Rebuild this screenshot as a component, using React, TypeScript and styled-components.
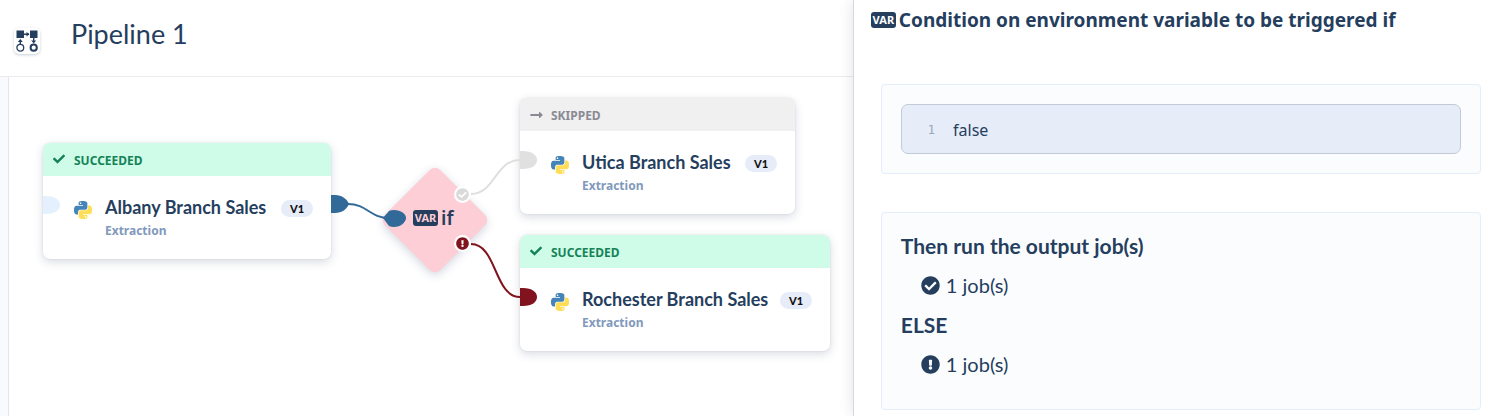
import React from 'react';
import styled, { createGlobalStyle } from 'styled-components';
import { FaCheck, FaCheckCircle, FaExclamationCircle, FaLongArrowAltRight } from 'react-icons/fa';

const navy = '#253e5e';

const GlobalStyle = createGlobalStyle`
  * { box-sizing: border-box; }
  body {
    margin: 0;
    background: #fff;
    color: ${navy};
    font-family: Lato, "Liberation Sans", sans-serif;
  }
  h1, h2, h3, p { margin: 0; }
`;

const Page = styled.div`
  display: grid;
  grid-template-columns: 57.2% minmax(0, 1fr);
  min-height: 100vh;
`;

const Main = styled.main`
  display: flex;
  flex-direction: column;
  min-width: 0;
`;

const Header = styled.header`
  display: flex;
  align-items: flex-start;
  gap: 31px;
  height: 77px;
  padding: 14px 14px 0;
  border-bottom: 1px solid #ebebed;
`;

const LogoTile = styled.div`
  display: flex;
  align-items: center;
  justify-content: center;
  width: 26px;
  height: 26px;
  margin-top: 14px;
  border-radius: 5px;
  background: #fff;
  box-shadow: 0 1px 3px rgba(37, 62, 94, 0.25);
`;

const Title = styled.h1`
  font-size: 27px;
  font-weight: 400;
  line-height: 40px;
`;

const Workspace = styled.div`
  display: flex;
  flex: 1;
  padding-left: 8px;
  background: #f8fafd;
`;

const Canvas = styled.div`
  position: relative;
  flex: 1;
  overflow: hidden;
  border-left: 1px solid #e3e6ea;
  background: #fff;
`;

const Node = styled.article<{ $x: number; $y: number; $width: number }>`
  position: absolute;
  left: ${p => p.$x}px;
  top: ${p => p.$y}px;
  width: ${p => p.$width}px;
  overflow: hidden;
  border-radius: 7px;
  background: #fff;
  box-shadow: 0 3px 10px rgba(37, 55, 94, 0.18), 0 0 2px rgba(37, 55, 94, 0.12);
`;

const Status = styled.div<{ $skipped: boolean }>`
  display: flex;
  align-items: center;
  gap: 8px;
  height: 33px;
  padding: 2px 10px 0;
  background: ${p => (p.$skipped ? '#f0f0f0' : '#cffce8')};
  color: ${p => (p.$skipped ? '#8a8a94' : '#158358')};
  font: 700 12px/16px "Noto Sans", sans-serif;
`;

const StatusIcon = styled.span`
  display: flex;
  width: 13px;
  height: 15px;
`;

const NodeBody = styled.div`
  display: grid;
  grid-template-columns: 18px minmax(0, 1fr) auto;
  column-gap: 13px;
  height: 83px;
  padding: 19px 18px 0 31px;
`;

const NodeIcon = styled.div`
  height: 18px;
  margin-top: 6px;
`;

const JobName = styled.h2`
  font-size: 18px;
  font-weight: 700;
  line-height: 24px;
  white-space: nowrap;
`;

const JobType = styled.p`
  color: #8199bc;
  font: 700 12px/24px "Noto Sans", sans-serif;
`;

const Version = styled.span`
  width: 32px;
  height: 17px;
  margin-top: 5px;
  border-radius: 9px;
  background: #e6edf9;
  color: #111;
  font-size: 11px;
  font-weight: 900;
  line-height: 17px;
  text-align: center;
`;

const Diamond = styled.div`
  position: absolute;
  left: 387px;
  top: 104px;
  width: 78px;
  height: 78px;
  border-radius: 7px;
  background: #fdced5;
  box-shadow: 2px 2px 10px rgba(37, 55, 94, 0.2);
  transform: rotate(45deg);
`;

const DiamondLabel = styled.div`
  position: absolute;
  left: 404px;
  top: 128px;
  display: flex;
  align-items: center;
  gap: 3px;
  font: 600 19px/26px "Noto Sans", sans-serif;
`;

const VarBadge = styled.span<{ $ink: string }>`
  flex: none;
  width: 25px;
  height: 16px;
  border-radius: 3px;
  background: ${navy};
  color: ${p => p.$ink};
  font: 700 11px/16px "Noto Sans", sans-serif;
  text-align: center;
`;

const Wires = styled.svg`
  position: absolute;
  left: 0;
  top: 0;
  width: 100%;
  height: 100%;
`;

const Outcome = styled.span<{ $y: number; $color: string }>`
  position: absolute;
  left: 445px;
  top: ${p => p.$y}px;
  width: 17px;
  height: 17px;
  padding: 2px;
  border-radius: 50%;
  background: #fff;
  color: ${p => p.$color};
  svg { display: block; width: 13px; height: 13px; }
`;

const Drawer = styled.aside`
  position: relative;
  min-width: 0;
  padding: 6px 10px 4px 17px;
  border-left: 1px solid #d4d8e2;
  background: #fff;
  box-shadow: 0 0 14px rgba(0, 0, 0, 0.12);
`;

const DrawerTitle = styled.h2`
  display: flex;
  align-items: center;
  gap: 3px;
  margin-bottom: 50px;
  font: 700 19px/28px "Noto Sans", sans-serif;
`;

const Panel = styled.section`
  margin: 0 0 38px 10px;
  padding: 19px;
  border: 1px solid #e4eefa;
  border-radius: 4px;
  background: #fbfcfe;
  &:last-child { margin-bottom: 0; }
`;

const Code = styled.div`
  display: flex;
  align-items: center;
  gap: 18px;
  height: 50px;
  padding: 2px 0 0 26px;
  border: 1px solid #c2cad7;
  border-radius: 7px;
  background: #e6ecf8;
  font: 400 16px/24px "Noto Sans", sans-serif;
`;

const LineNumber = styled.span`
  color: #98a6ba;
  font: 400 12px/24px "DejaVu Sans Mono", monospace;
`;

const Branch = styled.h3`
  font-size: 21px;
  font-weight: 700;
  line-height: 28px;
`;

const BranchJobs = styled.p`
  display: flex;
  align-items: center;
  gap: 6px;
  margin: 11px 0;
  padding-left: 20px;
  font-size: 20px;
  line-height: 29px;
  svg { width: 19px; height: 19px; }
`;

const PipelineIcon = () => (
  <svg width="22" height="22" viewBox="0 0 22 22" fill="none" stroke={navy}>
    <path d="M.5.5h7.5v7.5H.5zM14 .5h7.5v7.5H14z" fill={navy} stroke="none" />
    <path d="M8 4.3h5M4.3 14v-3M17.7 8v3" strokeWidth="1.4" />
    <path d="M10.5 2l3 2.3-3 2.3zM1.8 12L4.3 9l2.5 3zM15.2 10.5h5l-2.5 3z" fill={navy} stroke="none" />
    <circle cx="4.3" cy="17.7" r="3.4" strokeWidth="1.3" />
    <circle cx="17.7" cy="17.7" r="3.1" strokeWidth="2" />
  </svg>
);

const PythonIcon = () => (
  <svg width="18" height="18" viewBox="0 0 24 24">
    <path fill="#4584b6" d="M14.25.18l.9.2.73.26.59.3.45.32.34.34.25.34.16.33.1.3.04.26.02.2-.01.13V8.5l-.05.63-.13.55-.21.46-.26.38-.3.31-.33.25-.35.19-.35.14-.33.1-.3.07-.26.04-.21.02H8.77l-.69.05-.59.14-.5.22-.41.27-.33.32-.27.35-.2.36-.15.37-.1.35-.07.32-.04.27-.02.21v3.06H3.17l-.21-.03-.28-.07-.32-.12-.35-.18-.36-.26-.36-.36-.35-.46-.32-.59-.28-.73-.21-.88-.14-1.05-.05-1.23.06-1.22.16-1.04.24-.87.32-.71.36-.57.4-.44.42-.33.42-.24.4-.16.36-.1.32-.05.24-.01h.16l.06.01h8.16v-.83H6.18l-.01-2.75-.02-.37.05-.34.11-.31.17-.28.25-.26.31-.23.38-.2.44-.18.51-.15.58-.12.64-.1.71-.06.77-.04.84-.02 1.27.05zm-6.3 1.98l-.23.33-.08.41.08.41.23.34.33.22.41.09.41-.09.33-.22.23-.34.08-.41-.08-.41-.23-.33-.33-.22-.41-.09-.41.09z" />
    <path fill="#ffde57" d="M21.1 6.11l.28.06.32.12.35.18.36.27.36.35.35.47.32.59.28.73.21.88.14 1.04.05 1.23-.06 1.23-.16 1.04-.24.86-.32.71-.36.57-.4.45-.42.33-.42.24-.4.16-.36.09-.32.05-.24.02-.16-.01h-8.22v.82h5.84l.01 2.76.02.36-.05.34-.11.31-.17.29-.25.25-.31.24-.38.2-.44.17-.51.15-.58.13-.64.09-.71.07-.77.04-.84.01-1.27-.04-1.07-.14-.9-.2-.73-.25-.59-.3-.45-.33-.34-.34-.25-.34-.16-.33-.1-.3-.04-.25-.02-.2.01-.13v-5.34l.05-.64.13-.54.21-.46.26-.38.3-.32.33-.24.35-.2.35-.14.33-.1.3-.06.26-.04.21-.02.13-.01h5.84l.69-.05.59-.14.5-.21.41-.28.33-.32.27-.35.2-.36.15-.36.1-.35.07-.32.04-.28.02-.21V6.07h2.09l.14.01zm-6.47 14.25l-.23.33-.08.41.08.41.23.33.33.23.41.08.41-.08.33-.23.23-.33.08-.41-.08-.41-.23-.33-.33-.23-.41-.08-.41.08z" />
  </svg>
);

const jobs = [
  { name: 'Albany Branch Sales', status: 'SUCCEEDED', x: 34, y: 66, width: 288 },
  { name: 'Utica Branch Sales', status: 'SKIPPED', x: 511, y: 21, width: 275 },
  { name: 'Rochester Branch Sales', status: 'SUCCEEDED', x: 511, y: 158, width: 310 },
];

export default function App() {
  return (
    <Page>
      <GlobalStyle />
      <Main>
        <Header>
          <LogoTile><PipelineIcon /></LogoTile>
          <Title>Pipeline 1</Title>
        </Header>
        <Workspace>
          <Canvas>
            {jobs.map(job => (
              <Node key={job.name} $x={job.x} $y={job.y} $width={job.width}>
                <Status $skipped={job.status === 'SKIPPED'}>
                  <StatusIcon>
                    {job.status === 'SKIPPED' ? <FaLongArrowAltRight size={14} /> : <FaCheck size={12} />}
                  </StatusIcon>
                  {job.status}
                </Status>
                <NodeBody>
                  <NodeIcon><PythonIcon /></NodeIcon>
                  <div>
                    <JobName>{job.name}</JobName>
                    <JobType>Extraction</JobType>
                  </div>
                  <Version>V1</Version>
                </NodeBody>
              </Node>
            ))}
            <Diamond />
            <Wires fill="none" strokeWidth="2">
              <path d="M339 127C358 127 361 141 380 141" stroke="#316998" />
              <path d="M462 117C486 117 486 83 511 83" stroke="#dedede" />
              <path d="M462 167C488 167 485 220 511 220" stroke="#80131d" />
              <path d="M34 119h3c9 0 14 4 14 9s-5 9-14 9h-3z" fill="#e4f0fd" />
              <path d="M322 118h4c7 0 12 4 14 9-2 5-7 9-14 9h-4z" fill="#316998" />
              <path d="M374 141l6-7q2-1 5-1c7 0 12 4 12 8s-5 9-12 9q-3 0-5-1z" fill="#316998" />
              <path d="M511 74h3c9 0 14 4 14 9s-5 9-14 9h-3z" fill="#e0e0e1" />
              <path d="M511 211h3c9 0 14 4 14 9s-5 9-14 9h-3z" fill="#80131d" />
            </Wires>
            <DiamondLabel><VarBadge $ink="#fdced5">VAR</VarBadge>if</DiamondLabel>
            <Outcome $y={109} $color="#dadada"><FaCheckCircle /></Outcome>
            <Outcome $y={158} $color="#80131d"><FaExclamationCircle /></Outcome>
          </Canvas>
        </Workspace>
      </Main>
      <Drawer>
        <DrawerTitle>
          <VarBadge $ink="#fff">VAR</VarBadge>
          Condition on environment variable to be triggered if
        </DrawerTitle>
        <Panel>
          <Code><LineNumber>1</LineNumber>false</Code>
        </Panel>
        <Panel>
          <Branch>Then run the output job(s)</Branch>
          <BranchJobs><FaCheckCircle />1 job(s)</BranchJobs>
          <Branch>ELSE</Branch>
          <BranchJobs><FaExclamationCircle />1 job(s)</BranchJobs>
        </Panel>
      </Drawer>
    </Page>
  );
}
